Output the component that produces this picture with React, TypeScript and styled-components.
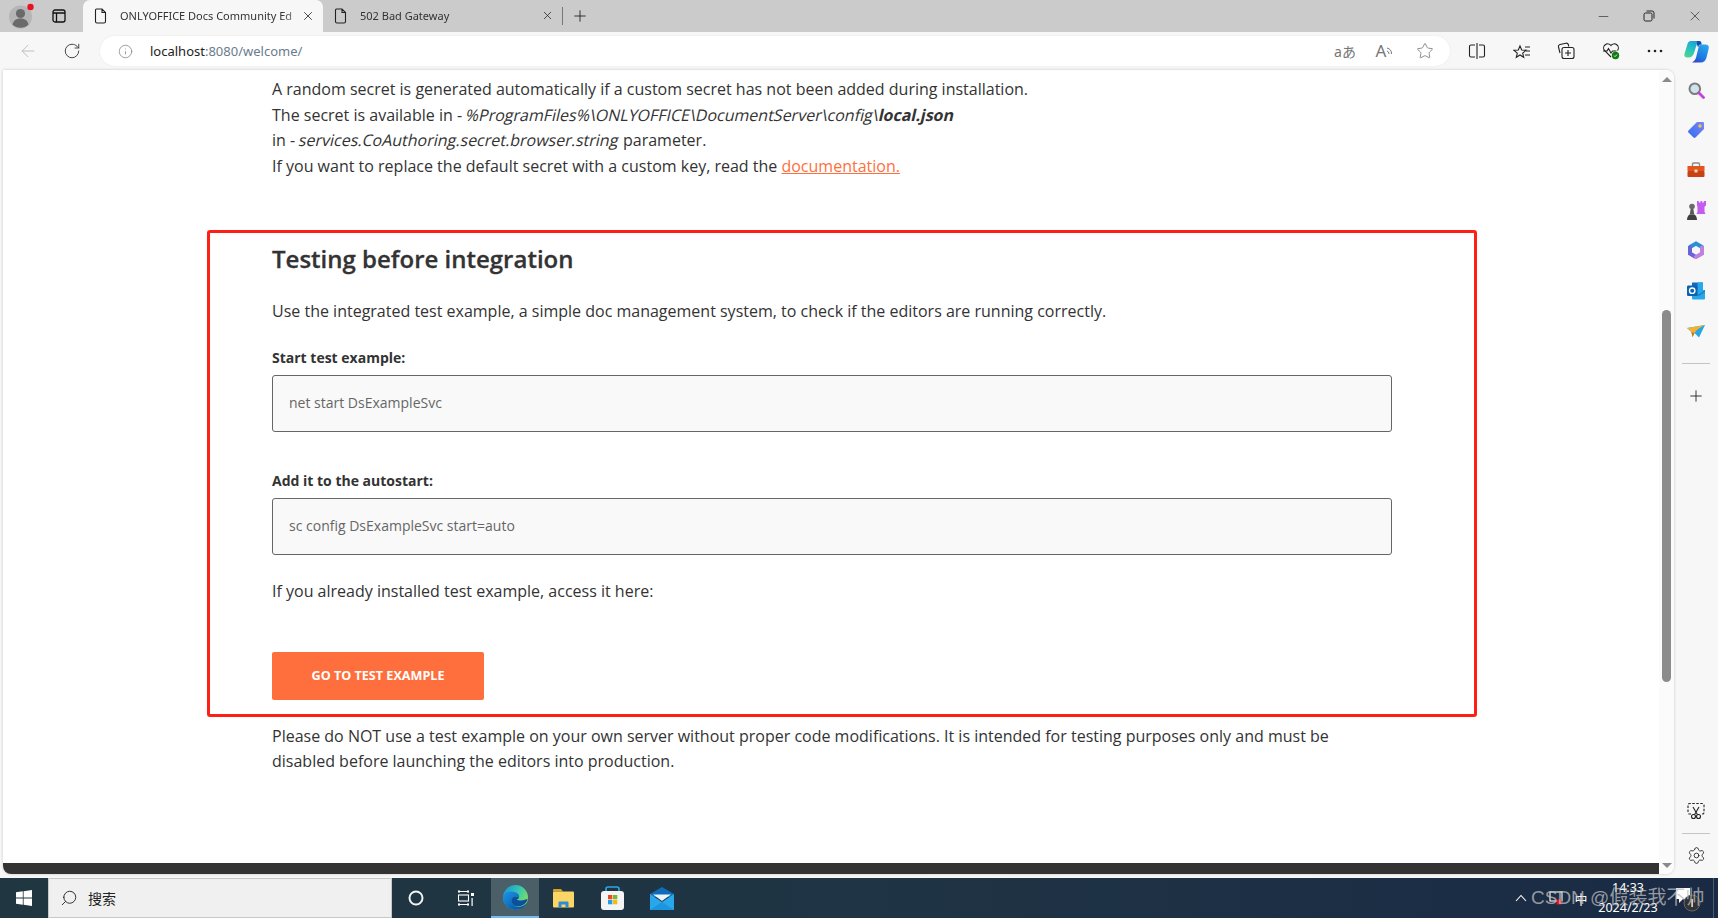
import React from "react";
import styled, { createGlobalStyle } from "styled-components";
import { ArrowLeft, Info, Minus, Plus, RotateCw, Search, Settings, Star, X } from "lucide-react";

const GlobalStyle = createGlobalStyle`
  html, body {
    margin: 0;
    padding: 0;
    height: 100%;
    overflow: hidden;
  }
  body {
    font-family: "Open Sans", "Liberation Sans", sans-serif;
  }
`;

const Screen = styled.div`
  width: 1718px;
  height: 918px;
  display: flex;
  flex-direction: column;
  background: #f7f7f7;
  position: relative;
  overflow: hidden;
`;

/* browser chrome */

const TabStrip = styled.div`
  height: 32px;
  flex: none;
  background: #cbcbcb;
  display: flex;
  align-items: stretch;
`;

const Profile = styled.div`
  width: 44px;
  display: flex;
  align-items: center;
  justify-content: center;
`;

const StripIcon = styled.div`
  width: 30px;
  margin-right: 9px;
  display: flex;
  align-items: center;
  justify-content: center;
  color: #222;
`;

const Tab = styled.div<{ $active?: boolean; $width: number }>`
  width: ${(p) => p.$width}px;
  flex: none;
  display: flex;
  align-items: center;
  padding: 0 7px 1px 11px;
  box-sizing: border-box;
  background: ${(p) => (p.$active ? "#f7f7f7" : "transparent")};
  border-radius: 7px 7px 0 0;
  color: #222;
`;

const TabTitle = styled.span`
  flex: 1;
  min-width: 0;
  margin-left: 12px;
  white-space: nowrap;
  font-family: "Noto Sans", sans-serif;
  font-size: 11px;
  color: #333;
  mask-image: linear-gradient(90deg, #000 90%, rgba(0, 0, 0, 0.35) 100%);
`;

const TabClose = styled.div`
  width: 16px;
  flex: none;
  display: flex;
  justify-content: center;
`;

const TabDivider = styled.div`
  width: 1px;
  height: 18px;
  background: #777;
  align-self: center;
`;

const NewTab = styled.div`
  width: 34px;
  display: flex;
  align-items: center;
  justify-content: center;
  color: #222;
`;

const WindowControls = styled.div`
  margin-left: auto;
  display: flex;
  color: #222;
`;

const WindowButton = styled.div`
  width: 46px;
  display: flex;
  align-items: center;
  justify-content: center;
`;

const Toolbar = styled.div`
  height: 38px;
  flex: none;
  display: flex;
  align-items: center;
  padding-left: 6px;
  background: #f7f7f7;
`;

const ToolButton = styled.div<{ $width?: number }>`
  width: ${(p) => p.$width ?? 44.5}px;
  flex: none;
  display: flex;
  align-items: center;
  justify-content: center;
  color: #333;
`;

const AddressBar = styled.div`
  width: 1350px;
  height: 30px;
  margin: 0 5px 0 6px;
  border-radius: 15px;
  background: #fff;
  box-shadow: 0 0 2px rgba(0, 0, 0, 0.08);
  display: flex;
  align-items: center;
  padding-left: 18px;
  box-sizing: border-box;
  flex: none;
`;

const Url = styled.span`
  margin-left: 17px;
  font-family: "Noto Sans", sans-serif;
  font-size: 13px;
  color: #6a7c8c;
`;

const Host = styled.span`
  color: #222;
`;

const AddressActions = styled.div`
  margin-left: auto;
  display: flex;
  padding-right: 5px;
`;

const AddressAction = styled.div`
  width: 40px;
  display: flex;
  align-items: center;
  justify-content: center;
  color: #777;
  font-family: "Noto Sans", "Noto Sans CJK JP", sans-serif;
  font-size: 14px;
`;

const ReadAloudLetter = styled.span`
  font-size: 17px;
  line-height: 20px;
`;

/* middle */

const Middle = styled.div`
  flex: 1;
  min-height: 0;
  display: flex;
`;

const Viewport = styled.div`
  width: 1671px;
  margin: 0 0 4px 3px;
  flex: none;
  background: #fff;
  border-radius: 0 8px 8px 8px;
  box-shadow: 0 0 3px rgba(0, 0, 0, 0.2);
  display: grid;
  grid-template-columns: 1fr 15px;
  grid-template-rows: 1fr 11px;
  overflow: hidden;
`;

const Article = styled.main`
  padding: 7px 0 0 269px;
  overflow: hidden;
  color: #333;
  font-size: 16px;
  line-height: 25.6px;
`;

const Paragraph = styled.p<{ $top?: number }>`
  margin: ${(p) => p.$top ?? 0}px 0 0;
  width: 1060px;
`;

/* the page's font has no italic face, so the browser slanted the upright one */
const Slanted = styled.span`
  display: inline-block;
  transform: skewX(-13deg);
`;

const Link = styled.a`
  color: #ff6f3d;
  text-decoration: underline;
`;

const Heading = styled.h2`
  margin: 64px 0 0;
  font-size: 24px;
  line-height: 32px;
  font-weight: 600;
  color: #333;
  -webkit-text-stroke: 0.3px #333;
`;

const FieldLabel = styled.div<{ $top: number }>`
  margin-top: ${(p) => p.$top}px;
  font-size: 14px;
  line-height: 20px;
  font-weight: 700;
  color: #333;
`;

const CodeField = styled.div`
  margin-top: 7px;
  width: 1120px;
  height: 57px;
  box-sizing: border-box;
  border: 1px solid #666;
  border-radius: 3px;
  background: #f9f9f9;
  padding: 0 0 1px 16px;
  display: flex;
  align-items: center;
  font-size: 14px;
  color: #666;
`;

const ActionButton = styled.div`
  margin-top: 47px;
  width: 212px;
  height: 48px;
  border-radius: 2px;
  background: #ff6f3d;
  color: #fff;
  display: flex;
  align-items: center;
  justify-content: center;
  font-size: 12.6px;
  font-weight: 700;
  text-transform: uppercase;
`;

const Annotation = styled.div`
  position: absolute;
  left: 207px;
  top: 230px;
  width: 1270px;
  height: 487px;
  box-sizing: border-box;
  border: 3px solid #ff2015;
  border-radius: 3px;
  pointer-events: none;
`;

const VScroll = styled.div`
  grid-row: 1 / 3;
  grid-column: 2;
  background: #fbfbfb;
  display: flex;
  flex-direction: column;
  align-items: center;
`;

const ArrowUp = styled.div`
  margin-top: 7px;
  border: 5px solid transparent;
  border-top: 0;
  border-bottom: 5px solid #8a8a8a;
`;

const Thumb = styled.div`
  margin-top: 228px;
  width: 9px;
  height: 372px;
  border-radius: 5px;
  background: #8b8b8b;
`;

const ArrowDown = styled.div`
  margin-top: auto;
  margin-bottom: 6px;
  border: 5px solid transparent;
  border-bottom: 0;
  border-top: 5px solid #8a8a8a;
`;

const HScroll = styled.div`
  grid-row: 2;
  grid-column: 1;
  background: #333;
`;

const Sidebar = styled.aside`
  flex: 1;
  display: flex;
  flex-direction: column;
  align-items: center;
  padding-bottom: 2px;
`;

const SideIcon = styled.div`
  height: 40.2px;
  flex: none;
  display: flex;
  align-items: center;
  justify-content: center;
  color: #222;
`;

const SideRule = styled.div<{ $gap: number }>`
  width: 28px;
  height: 1px;
  flex: none;
  background: #c4c4c4;
  margin: ${(p) => p.$gap}px 0;
`;

const SideSpacer = styled.div`
  flex: 1;
`;

/* taskbar */

const Taskbar = styled.footer`
  height: 40px;
  flex: none;
  background: linear-gradient(90deg, #203640 0%, #1f3444 50%, #1a2a45 100%);
  display: flex;
  align-items: stretch;
`;

const StartButton = styled.div`
  width: 48px;
  display: flex;
  align-items: center;
  justify-content: center;
`;

const SearchBox = styled.div`
  width: 344px;
  box-sizing: border-box;
  background: #f0f0f0;
  border: 1px solid #c8c8c8;
  display: flex;
  align-items: center;
  padding-left: 11px;
  gap: 10px;
  font-family: "Noto Sans CJK SC", sans-serif;
  font-size: 14px;
  color: #222;
`;

const SearchGlyph = styled(Search)`
  transform: scaleX(-1);
`;

const TaskIcon = styled.div<{ $active?: boolean; $width: number }>`
  width: ${(p) => p.$width}px;
  box-sizing: border-box;
  display: flex;
  align-items: center;
  justify-content: center;
  background: ${(p) => (p.$active ? "#4a5f68" : "transparent")};
  border-bottom: ${(p) => (p.$active ? "2px solid #76b9ed" : "none")};
`;

const Tray = styled.div`
  margin-left: auto;
  margin-right: 4px;
  display: flex;
  align-items: center;
  color: #fff;
  border-right: 1px solid #4a5a70;
`;

const TrayGlyph = styled.div<{ $width: number }>`
  width: ${(p) => p.$width}px;
  display: flex;
  justify-content: center;
  font-family: "Noto Sans CJK SC", sans-serif;
  font-size: 13px;
`;

const Clock = styled.div`
  width: 72px;
  text-align: center;
  font-family: "Noto Sans", sans-serif;
  font-size: 12.5px;
  line-height: 20px;
  white-space: nowrap;
`;

const Watermark = styled.div`
  position: absolute;
  left: 1531px;
  top: 886px;
  font-family: "Liberation Sans", "Noto Sans CJK SC", sans-serif;
  font-size: 19px;
  line-height: 24px;
  color: rgba(190, 190, 190, 0.75);
  white-space: nowrap;
  pointer-events: none;
`;

const PageIcon = () => (
  <svg width="14" height="16" viewBox="0 0 14 16" fill="none" stroke="#222" strokeWidth="1.1">
    <path d="M2.500 1h5.500l3.500 3.500V13.500a1.500 1.500 0 0 1-1.500 1.500H3a1.500 1.500 0 0 1-1.500-1.500V2A1 1 0 0 1 2.500 1ZM8 1v3.500h3.500" />
  </svg>
);

const RestoreIcon = () => (
  <svg width="12" height="12" viewBox="0 0 12 12" fill="none" stroke="#222" strokeWidth="1">
    <rect x="1" y="3" width="8" height="8" rx="1.500" />
    <path d="M3.500 1h5.500a2 2 0 0 1 2 2v5.500" />
  </svg>
);

const AvatarIcon = () => (
  <svg width="28" height="28" viewBox="0 0 28 28">
    <circle cx="12.500" cy="15" r="11.500" fill="#b5b5b5" />
    <circle cx="12.500" cy="11.500" r="4.600" fill="#6a6a6a" />
    <path d="M4.500 22.500c1-4.500 4.500-6 8-6s7 1.500 8 6a11.500 11.500 0 0 1-16 0Z" fill="#6a6a6a" />
    <circle cx="22.500" cy="5" r="3.200" fill="#e81123" />
  </svg>
);

const WorkspaceIcon = () => (
  <svg width="14" height="14" viewBox="0 0 14 14" fill="none" stroke="#111" strokeWidth="1.300">
    <rect x="1" y="1" width="12" height="12" rx="2" />
    <path d="M1 4h12M4.500 4v9" />
  </svg>
);

const SoundWaves = () => (
  <svg width="8" height="12" viewBox="0 0 8 12" fill="none" stroke="#777" strokeWidth="1">
    <path d="M1 6a3 3 0 0 1 2 3M1 3a6 6 0 0 1 4.500 6" />
  </svg>
);

const SplitIcon = () => (
  <svg width="18" height="18" viewBox="0 0 18 18" fill="none" stroke="#222" strokeWidth="1.100">
    <path d="M7 3H3a1.500 1.500 0 0 0-1.500 1.500v9A1.500 1.500 0 0 0 3 15h4M11 3h4a1.500 1.500 0 0 1 1.500 1.500v9A1.500 1.500 0 0 1 15 15h-4M9 1v16" />
  </svg>
);

const FavouritesIcon = () => (
  <svg width="18" height="18" viewBox="0 0 18 18" fill="none" stroke="#222" strokeWidth="1.100">
    <path d="M7 2l1.700 4 4.300.3-3.300 2.800 1 4.200L7 11l-3.700 2.300 1-4.200L1 6.300 5.300 6 7 2Z" transform="translate(0 2)" />
    <path d="M12 5h5M13 9h4M12 13h5" />
  </svg>
);

const CollectionsIcon = () => (
  <svg width="18" height="18" viewBox="0 0 18 18" fill="none" stroke="#222" strokeWidth="1.100">
    <path d="M3 11L1.500 5a2 2 0 0 1 1.500-2.500L9 1.200a2 2 0 0 1 2.300 1.300l.5 2" />
    <rect x="5" y="5.500" width="12" height="11" rx="2" />
    <path d="M11 8v6M8 11h6" />
  </svg>
);

const HealthIcon = () => (
  <svg width="18" height="18" viewBox="0 0 18 18" fill="none">
    <path d="M9 15L2.500 8.500a4 4 0 0 1 6.500-5 4 4 0 0 1 6.500 5" stroke="#222" strokeWidth="1.100" />
    <path d="M1 9h4l1.500-2.500L9 11l1.500-2h4" stroke="#222" strokeWidth="1.100" />
    <circle cx="13.500" cy="13.500" r="3.700" fill="#107c10" />
    <path d="M12 13.600l1 1 2-2" stroke="#fff" strokeWidth="0.900" />
  </svg>
);

const CopilotIcon = () => (
  <svg width="25" height="23" viewBox="0 0 25 23">
    <defs>
      <linearGradient id="cpa" x1="0.700" y1="0" x2="0.200" y2="1">
        <stop offset="0" stopColor="#1d9fdc" />
        <stop offset="0.600" stopColor="#2cc8b8" />
        <stop offset="1" stopColor="#52d488" />
      </linearGradient>
      <linearGradient id="cpb" x1="0.800" y1="0" x2="0.300" y2="1">
        <stop offset="0" stopColor="#2ba6f0" />
        <stop offset="0.700" stopColor="#1a78e0" />
        <stop offset="1" stopColor="#3448c8" />
      </linearGradient>
    </defs>
    <path d="M7 1h8.500c-1.500.7-2.300 2-2.800 3.500L10 13c-.8 2.500-2.500 4.500-5.500 4.500H3C1 17.500 0 16 .4 14L3.500 4C4.100 2 5 1 7 1Z" fill="url(#cpa)" />
    <path d="M17 4.500h4.500c2.400 0 3.800 1.700 3.200 4l-2.200 9c-.7 3-2.700 5-6 5H8c2-1 3.300-2.500 4-4.700l2.500-10.300C15 5.500 15.700 4.500 17 4.500Z" fill="url(#cpb)" />
    <path d="M12.500 1h2.800c1.500 0 2.300 1 2.300 3.500h-1c-1.300 0-2 1-2.500 3l-1.300-3.500c.2-1.500.6-2.500-.3-3Z" fill="#0f4fa8" />
  </svg>
);

const MagnifierIcon = () => (
  <svg width="17" height="17" viewBox="0 0 17 17" fill="none">
    <circle cx="6.800" cy="6.800" r="5.300" fill="#cfe3ee" stroke="#7c7c7c" strokeWidth="2" />
    <path d="M11 11l4.500 4.500" stroke="#c63fe0" strokeWidth="2.800" strokeLinecap="round" />
  </svg>
);

const TagIcon = () => (
  <svg width="18" height="18" viewBox="0 0 18 18">
    <defs>
      <linearGradient id="tg" x1="0" y1="1" x2="1" y2="0">
        <stop offset="0" stopColor="#2f6cf0" />
        <stop offset="1" stopColor="#7f86f5" />
      </linearGradient>
    </defs>
    <path d="M10 1h6a1 1 0 0 1 1 1v6l-8.500 8.500a1.500 1.500 0 0 1-2 0l-5-5a1.500 1.500 0 0 1 0-2L10 1Z" fill="url(#tg)" />
    <circle cx="13" cy="5" r="1.700" fill="#f5c542" />
  </svg>
);

const ToolboxIcon = () => (
  <svg width="20" height="20" viewBox="0 0 20 20">
    <path d="M6.500 6V4a1 1 0 0 1 1-1h5a1 1 0 0 1 1 1v2" fill="none" stroke="#8a8a8a" strokeWidth="1.400" />
    <rect x="1.500" y="6" width="17" height="5" fill="#e2561d" />
    <rect x="1.500" y="11" width="17" height="6" rx="1" fill="#c8410f" />
    <rect x="8.500" y="9.500" width="3" height="3" fill="#e8d8c8" />
  </svg>
);

const ChessIcon = () => (
  <svg width="19" height="19" viewBox="0 0 19 19">
    <path d="M10 0h1.800v1.500h1.700V0h1.700v1.500h1.600V0H19v4.500l-1.500 1.200V11l1 2h-9l1-2V5.700L10 4.500V0Z" fill="#c45cf2" />
    <circle cx="5" cy="5.500" r="2.800" fill="#6a6a6a" />
    <path d="M3.700 8h2.600l1 5.500H2.700L3.700 8Z" fill="#5a5a5a" />
    <path d="M0 19c0-3 1.200-4.500 2.700-5.500h4.600C8.800 14.500 10 16 10 19H0Z" fill="#404040" />
  </svg>
);

const M365Icon = () => (
  <svg width="18" height="19" viewBox="0 0 18 19" fill="none" strokeWidth="4" strokeLinecap="round">
    <path d="M3 6L9 2.500l6 3.500" stroke="#2a8fd8" />
    <path d="M3 6.500v6L8 15.500" stroke="#6a62d8" />
    <path d="M15 6.500v6L9 16" stroke="#c080e0" />
  </svg>
);

const OutlookIcon = () => (
  <svg width="18" height="18" viewBox="0 0 18 18">
    <rect x="5" y="0.500" width="11" height="8" fill="#0f6cbd" />
    <rect x="10.500" y="0.500" width="5.500" height="8" fill="#28a8ea" />
    <path d="M5 8h13v8.500a1 1 0 0 1-1 1H6a1 1 0 0 1-1-1V8Z" fill="#28a8ea" />
    <path d="M5 8l6.500 4.500L18 8v2l-6.500 4.500L5 10Z" fill="#0f6cbd" opacity=".6" />
    <rect y="3.500" width="10.500" height="10.500" rx="1.200" fill="#0a62b0" />
    <circle cx="5.200" cy="8.700" r="2.700" fill="none" stroke="#fff" strokeWidth="1.400" />
  </svg>
);

const PlaneIcon = () => (
  <svg width="18" height="13" viewBox="0 0 18 13">
    <path d="M0 3L18 0l-6 12.500L7.500 8 5.500 12 4.500 7 0 3Z" fill="#27a6e5" />
    <path d="M0 3L18 0c-4 2-8 4-10.500 8L5.500 12 4.500 7 0 3Z" fill="#f2b233" />
    <path d="M4.500 7l3 1L5.500 12 4.500 7Z" fill="#c47a1c" />
  </svg>
);

const ScissorsIcon = () => (
  <svg width="18" height="18" viewBox="0 0 18 18" fill="none" stroke="#222" strokeWidth="1.100">
    <path d="M4 12H2.500a1.500 1.500 0 0 1-1.500-1.500V3A1.500 1.500 0 0 1 2.500 1.500h13A1.500 1.500 0 0 1 17 3v7.500a1.500 1.500 0 0 1-1.500 1.500H14" strokeDasharray="2.500 1.500" />
    <circle cx="6.500" cy="14.500" r="2" />
    <circle cx="11.500" cy="14.500" r="2" />
    <path d="M7.500 12.800L12 5M10.500 12.800L6 5" />
  </svg>
);

const WindowsLogo = () => (
  <svg width="16" height="16" viewBox="0 0 16 16" fill="#fff">
    <path d="M0 2.200l6.800-.9v6.300H0V2.200ZM7.600 1.200L16 0v7.600H7.600V1.200ZM0 8.400h6.800v6.300L0 13.800V8.400ZM7.600 8.400H16V16l-8.400-1.200V8.400Z" />
  </svg>
);

const CortanaIcon = () => (
  <svg width="16" height="16" viewBox="0 0 16 16" fill="none" stroke="#f2f2f2" strokeWidth="2">
    <circle cx="8" cy="8" r="6.500" />
  </svg>
);

const TaskViewIcon = () => (
  <svg width="16" height="16" viewBox="0 0 16 16" fill="none" stroke="#fff" strokeWidth="1.100">
    <path d="M0 1.500h11M0 14.500h11M1 0v3M10 0v3M1 13v3M10 13v3" />
    <rect x="0.500" y="5" width="10" height="6" />
    <rect x="13" y="3" width="3" height="3" fill="#fff" stroke="none" />
    <rect x="13.500" y="8" width="1.200" height="8" fill="#fff" stroke="none" />
  </svg>
);

const EdgeIcon = () => (
  <svg width="25" height="25" viewBox="0 0 25 25">
    <defs>
      <linearGradient id="eg" x1="0.100" y1="0.100" x2="1" y2="0.600">
        <stop offset="0" stopColor="#1b9bd0" />
        <stop offset="0.500" stopColor="#35c6b4" />
        <stop offset="1" stopColor="#84e05c" />
      </linearGradient>
      <linearGradient id="eb" x1="0" y1="0.200" x2="0.800" y2="1">
        <stop offset="0" stopColor="#1a8ee0" />
        <stop offset="1" stopColor="#0c4f9c" />
      </linearGradient>
    </defs>
    <circle cx="12.500" cy="12.500" r="12.500" fill="url(#eg)" />
    <path d="M0 12.500C0 9 3.500 6.500 7.500 6.500c5 0 9.500 2 8.500 6-2-1.500-5-1.500-6.500.5-1.800 2.500-.5 7 3.500 8.500 4 1.200 8.500-.5 11-4C22.500 22 18 25 12.500 25 5.500 25 0 19.500 0 12.500Z" fill="url(#eb)" />
    <path d="M9.500 13c1.500-2 4.500-2 6.500-.5-.3 1-1.200 1.600-2.500 1.800 2 1.700 5.500 1.700 9 .3.500-.2 1.500-.7 2-1.200-.2 1.300-.5 2.500-1 3.600-2.500 3.500-7 5.200-11 4-4-1.500-5-6-3-8Z" fill="#0c4f9c" />
  </svg>
);

const FolderIcon = () => (
  <svg width="21" height="19" viewBox="0 0 21 19">
    <path d="M0 1a1 1 0 0 1 1-1h7l2 2.500H0V1Z" fill="#d9a11f" />
    <rect y="2.500" width="21" height="16" rx="1" fill="#fbd565" />
    <path d="M5.500 18.500v-5a1 1 0 0 1 1-1h8a1 1 0 0 1 1 1v5h-3v-3h-4v3h-3Z" fill="#2d8cd8" />
  </svg>
);

const StoreIcon = () => (
  <svg width="23" height="24" viewBox="0 0 23 24">
    <path d="M5 6V3a2 2 0 0 1 2-2h9a2 2 0 0 1 2 2v3" fill="none" stroke="#28a8ea" strokeWidth="1.600" />
    <rect y="5" width="23" height="19" rx="3" fill="#f4f4f4" />
    <rect x="7" y="9" width="4.300" height="4.300" fill="#e8491f" />
    <rect x="12" y="9" width="4.300" height="4.300" fill="#7cb82f" />
    <rect x="7" y="14" width="4.300" height="4.300" fill="#1f9fe8" />
    <rect x="12" y="14" width="4.300" height="4.300" fill="#f8b912" />
  </svg>
);

const MailIcon = () => (
  <svg width="24" height="23" viewBox="0 0 24 23">
    <path d="M0 7L12 0l12 7v3H0V7Z" fill="#0f6cbd" />
    <path d="M3 7.500h18L12 14 3 7.500Z" fill="#e8f3fb" />
    <path d="M0 7l12 8 12-8v16H0V7Z" fill="#28a8ea" />
    <path d="M0 23l12-8 12 8H0Z" fill="#1b95e0" />
  </svg>
);

const BellIcon = () => (
  <svg width="30" height="28" viewBox="0 0 30 28" fill="none">
    <rect x="2" y="4" width="14" height="11" fill="#fff" />
    <path d="M5 15v4l4-4Z" fill="#fff" />
    <circle cx="18" cy="19" r="8" fill="#333" stroke="#666" strokeWidth="1" />
    <rect x="17.300" y="15" width="1.600" height="8" fill="#ddd" />
  </svg>
);

const TrayNetIcon = () => (
  <svg width="16" height="16" viewBox="0 0 16 16" fill="none">
    <rect x="1" y="2" width="12" height="9" stroke="#fff" strokeWidth="1.100" />
    <rect x="7.500" y="9.500" width="5" height="5" fill="#e81123" />
  </svg>
);

export default function App() {
  return (
    <Screen>
      <GlobalStyle />
      <TabStrip>
        <Profile>
          <AvatarIcon />
        </Profile>
        <StripIcon>
          <WorkspaceIcon />
        </StripIcon>
        <Tab $active $width={240}>
          <PageIcon />
          <TabTitle>ONLYOFFICE Docs Community Ed</TabTitle>
          <TabClose>
            <X size={14} strokeWidth={1.4} />
          </TabClose>
        </Tab>
        <Tab $width={239}>
          <PageIcon />
          <TabTitle>502 Bad Gateway</TabTitle>
          <TabClose>
            <X size={13} strokeWidth={1.4} />
          </TabClose>
        </Tab>
        <TabDivider />
        <NewTab>
          <Plus size={18} strokeWidth={1.2} />
        </NewTab>
        <WindowControls>
          <WindowButton>
            <Minus size={15} strokeWidth={1} />
          </WindowButton>
          <WindowButton>
            <RestoreIcon />
          </WindowButton>
          <WindowButton>
            <X size={16} strokeWidth={1} />
          </WindowButton>
        </WindowControls>
      </TabStrip>

      <Toolbar>
        <ToolButton $width={44}>
          <ArrowLeft size={20} strokeWidth={1} color="#b5b5b5" />
        </ToolButton>
        <ToolButton $width={44}>
          <RotateCw size={18} strokeWidth={1.2} />
        </ToolButton>
        <AddressBar>
          <Info size={15} strokeWidth={1.1} color="#777" />
          <Url>
            <Host>localhost</Host>:8080/welcome/
          </Url>
          <AddressActions>
            <AddressAction>aあ</AddressAction>
            <AddressAction>
              <ReadAloudLetter>A</ReadAloudLetter>
              <SoundWaves />
            </AddressAction>
            <AddressAction>
              <Star size={18} strokeWidth={1.1} />
            </AddressAction>
          </AddressActions>
        </AddressBar>
        <ToolButton>
          <SplitIcon />
        </ToolButton>
        <ToolButton>
          <FavouritesIcon />
        </ToolButton>
        <ToolButton>
          <CollectionsIcon />
        </ToolButton>
        <ToolButton>
          <HealthIcon />
        </ToolButton>
        <ToolButton>
          <svg width="16" height="4" viewBox="0 0 16 4" fill="#222">
            <circle cx="2" cy="2" r="1.300" />
            <circle cx="8" cy="2" r="1.300" />
            <circle cx="14" cy="2" r="1.300" />
          </svg>
        </ToolButton>
        <ToolButton $width={38}>
          <CopilotIcon />
        </ToolButton>
      </Toolbar>

      <Middle>
        <Viewport>
          <Article>
            <Paragraph>
              A random secret is generated automatically if a custom secret has not been added during installation.
              <br />
              The secret is available in - <Slanted>%ProgramFiles%\ONLYOFFICE\DocumentServer\config\<strong>local.json</strong></Slanted>
              <br />
              in - <Slanted>services.CoAuthoring.secret.browser.string</Slanted> parameter.
              <br />
              If you want to replace the default secret with a custom key, read the <Link>documentation.</Link>
            </Paragraph>
            <Heading>Testing before integration</Heading>
            <Paragraph $top={24}>
              Use the integrated test example, a simple doc management system, to check if the editors are running correctly.
            </Paragraph>
            <FieldLabel $top={23}>Start test example:</FieldLabel>
            <CodeField>net start DsExampleSvc</CodeField>
            <FieldLabel $top={39}>Add it to the autostart:</FieldLabel>
            <CodeField>sc config DsExampleSvc start=auto</CodeField>
            <Paragraph $top={24}>If you already installed test example, access it here:</Paragraph>
            <ActionButton>Go to test example</ActionButton>
            <Paragraph $top={24}>
              Please do NOT use a test example on your own server without proper code modifications. It is intended for testing purposes only and must be disabled before launching the editors into production.
            </Paragraph>
          </Article>
          <HScroll />
          <VScroll>
            <ArrowUp />
            <Thumb />
            <ArrowDown />
          </VScroll>
        </Viewport>
        <Sidebar>
          <SideIcon>
            <MagnifierIcon />
          </SideIcon>
          <SideIcon>
            <TagIcon />
          </SideIcon>
          <SideIcon>
            <ToolboxIcon />
          </SideIcon>
          <SideIcon>
            <ChessIcon />
          </SideIcon>
          <SideIcon>
            <M365Icon />
          </SideIcon>
          <SideIcon>
            <OutlookIcon />
          </SideIcon>
          <SideIcon>
            <PlaneIcon />
          </SideIcon>
          <SideRule $gap={12} />
          <SideIcon>
            <Plus size={18} strokeWidth={1.2} />
          </SideIcon>
          <SideSpacer />
          <SideIcon>
            <ScissorsIcon />
          </SideIcon>
          <SideRule $gap={2} />
          <SideIcon>
            <Settings size={19} strokeWidth={1.1} />
          </SideIcon>
        </Sidebar>
      </Middle>

      <Taskbar>
        <StartButton>
          <WindowsLogo />
        </StartButton>
        <SearchBox>
          <SearchGlyph size={18} strokeWidth={1.2} />
          搜索
        </SearchBox>
        <TaskIcon $width={48}>
          <CortanaIcon />
        </TaskIcon>
        <TaskIcon $width={51}>
          <TaskViewIcon />
        </TaskIcon>
        <TaskIcon $active $width={48}>
          <EdgeIcon />
        </TaskIcon>
        <TaskIcon $width={49}>
          <FolderIcon />
        </TaskIcon>
        <TaskIcon $width={48}>
          <StoreIcon />
        </TaskIcon>
        <TaskIcon $width={52}>
          <MailIcon />
        </TaskIcon>
        <Tray>
          <TrayGlyph $width={46}>
            <svg width="12" height="8" viewBox="0 0 12 8" fill="none" stroke="#fff" strokeWidth="1.100">
              <path d="M1 7l5-5.500L11 7" />
            </svg>
          </TrayGlyph>
          <TrayGlyph $width={26}>
            <TrayNetIcon />
          </TrayGlyph>
          <TrayGlyph $width={22}>中</TrayGlyph>
          <Clock>
            14:33
            <br />
            2024/2/23
          </Clock>
          <TrayGlyph $width={49}>
            <BellIcon />
          </TrayGlyph>
        </Tray>
      </Taskbar>

      <Annotation />
      <Watermark>CSDN @假装我不帅</Watermark>
    </Screen>
  );
}
